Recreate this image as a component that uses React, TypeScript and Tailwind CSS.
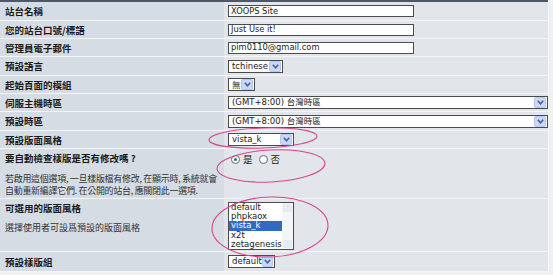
import React from "react";

const cjk = { fontFamily: '"Noto Sans CJK TC", "Noto Sans CJK SC", sans-serif' };
const latin = { fontFamily: '"DejaVu Sans", "Noto Sans CJK TC", sans-serif' };

function Arrow() {
  return (
    <div className="flex h-[11px] w-[12px] items-center justify-center rounded-[2px] border border-[#b4c6ec] bg-[#c9d8f7]">
      <svg width="7" height="5" viewBox="0 0 7 5">
        <path d="M0.8 0.8 L3.5 3.8 L6.2 0.8" fill="none" stroke="#4a5f9a" strokeWidth="1.6" />
      </svg>
    </div>
  );
}

function Select({ w, text, cjkText }: { w: string; text: string; cjkText?: boolean }) {
  return (
    <div className={`flex h-[13px] items-center justify-between border border-[#4b4b4b] bg-white pl-[3px] pr-[1px] ${w}`}>
      <span className="whitespace-nowrap text-[8.5px] leading-none text-[#222]" style={cjkText ? cjk : latin}>
        {text}
      </span>
      <Arrow />
    </div>
  );
}

function Input({ text }: { text: string }) {
  return (
    <div className="flex h-[12px] w-[186px] items-center border border-[#4b4b4b] bg-white pl-[2px] text-[8.3px] leading-none text-[#222]" style={latin}>
      {text}
    </div>
  );
}

function Row({ h, label, children, desc, top }: { h: string; label: string; children: React.ReactNode; desc?: React.ReactNode; top?: boolean }) {
  return (
    <div className={`flex border-b border-[#f3f5f7] ${h}`}>
      <div className={`flex w-[224px] shrink-0 flex-col bg-[#d5dce4] pl-[5px] ${top ? "pt-[2px]" : "justify-center"}`}>
        <div className="whitespace-nowrap text-[9.5px] font-bold leading-[14px] text-[#1a1a1a]" style={cjk}>
          {label}
        </div>
        {desc}
      </div>
      <div className={`flex flex-1 bg-[#e2e5e9] pl-[4px] ${top ? "items-start pt-[3px]" : "items-center"}`}>{children}</div>
    </div>
  );
}

export default function App() {
  return (
    <div className="relative h-[275px] w-[553px] overflow-hidden bg-[#eef0f2]">
      <div className="w-[549px] border-r border-[#f5f6f8]">
        <div className="h-[2px] bg-[#4d5966]" />
        <Row h="h-[19px]" label="站台名稱">
          <Input text="XOOPS Site" />
        </Row>
        <Row h="h-[18px]" label="您的站台口號/標語">
          <Input text="Just Use it!" />
        </Row>
        <Row h="h-[18px]" label="管理員電子郵件">
          <Input text="pim0110@gmail.com" />
        </Row>
        <Row h="h-[19px]" label="預設語言">
          <Select w="w-[55px]" text="tchinese" />
        </Row>
        <Row h="h-[18px]" label="起始頁面的模組">
          <Select w="w-[27px]" text="無" cjkText />
        </Row>
        <Row h="h-[18px]" label="伺服主機時區">
          <Select w="w-[320px]" text="(GMT+8:00) 台灣時區" />
        </Row>
        <Row h="h-[19px]" label="預設時區">
          <Select w="w-[320px]" text="(GMT+8:00) 台灣時區" />
        </Row>
        <Row h="h-[18px]" label="預設版面風格">
          <Select w="w-[66px]" text="vista_k" />
        </Row>
        <Row
          h="h-[50px]"
          top
          label="要自動檢查樣版是否有修改嗎 ?"
          desc={
            <div className="mt-[8px] whitespace-nowrap text-[9px] leading-[12px] tracking-[-0.3px] text-[#333]" style={cjk}>
              若啟用這個選項, 一旦樣版檔有修改, 在顯示時, 系統就會
              <br />
              自動重新編譯它們. 在公開的站台, 應關閉此一選項.
            </div>
          }
        >
          <div className="flex items-center gap-[3px] pl-[3px] pt-[3px] text-[9.5px] leading-none text-[#222]" style={cjk}>
            <span className="flex h-[9px] w-[9px] items-center justify-center rounded-full border border-[#5a6b80] bg-white">
              <span className="h-[3px] w-[3px] rounded-full bg-[#2a7a2a]" />
            </span>
            <span>是</span>
            <span className="ml-[3px] h-[9px] w-[9px] rounded-full border border-[#5a6b80] bg-white" />
            <span>否</span>
          </div>
        </Row>
        <Row
          h="h-[53px]"
          top
          label="可選用的版面風格"
          desc={
            <div className="mt-[7px] whitespace-nowrap text-[9px] leading-[12px] text-[#333]" style={cjk}>
              選擇使用者可設爲預設的版面風格
            </div>
          }
        >
          <div className="flex h-[48px] w-[66px] border border-[#4b4b4b] bg-white">
            <div className="flex flex-1 flex-col text-[8.5px] leading-[9.2px] text-[#222]" style={latin}>
              <span className="pl-[2px]">default</span>
              <span className="pl-[2px]">phpkaox</span>
              <span className="bg-[#316ac5] pl-[2px] text-white">vista_k</span>
              <span className="pl-[2px]">x2t</span>
              <span className="pl-[2px]">zetagenesis</span>
            </div>
            <div className="flex w-[11px] flex-col items-center justify-between bg-[#f4f5f7] py-[1px]">
              <div className="h-[8px] w-[9px] rounded-[1px] bg-[#e6ebf4] text-center text-[6px] leading-[8px] text-[#b5bfd0]">˄</div>
              <div className="h-[8px] w-[9px] rounded-[1px] bg-[#e6ebf4] text-center text-[6px] leading-[8px] text-[#b5bfd0]">˅</div>
            </div>
          </div>
        </Row>
        <Row h="h-[20px]" label="預設樣版組">
          <Select w="w-[47px]" text="default" />
        </Row>
      </div>
      <svg className="pointer-events-none absolute left-0 top-0" width="553" height="275">
        <g fill="none" stroke="#d5478f" strokeWidth="1.1">
          <ellipse cx="263" cy="138" rx="54" ry="10" transform="rotate(-2 263 138)" />
          <ellipse cx="271" cy="166" rx="54" ry="16" transform="rotate(-3 271 166)" />
          <ellipse cx="270" cy="227" rx="58" ry="30" transform="rotate(-2 270 227)" />
        </g>
      </svg>
    </div>
  );
}
